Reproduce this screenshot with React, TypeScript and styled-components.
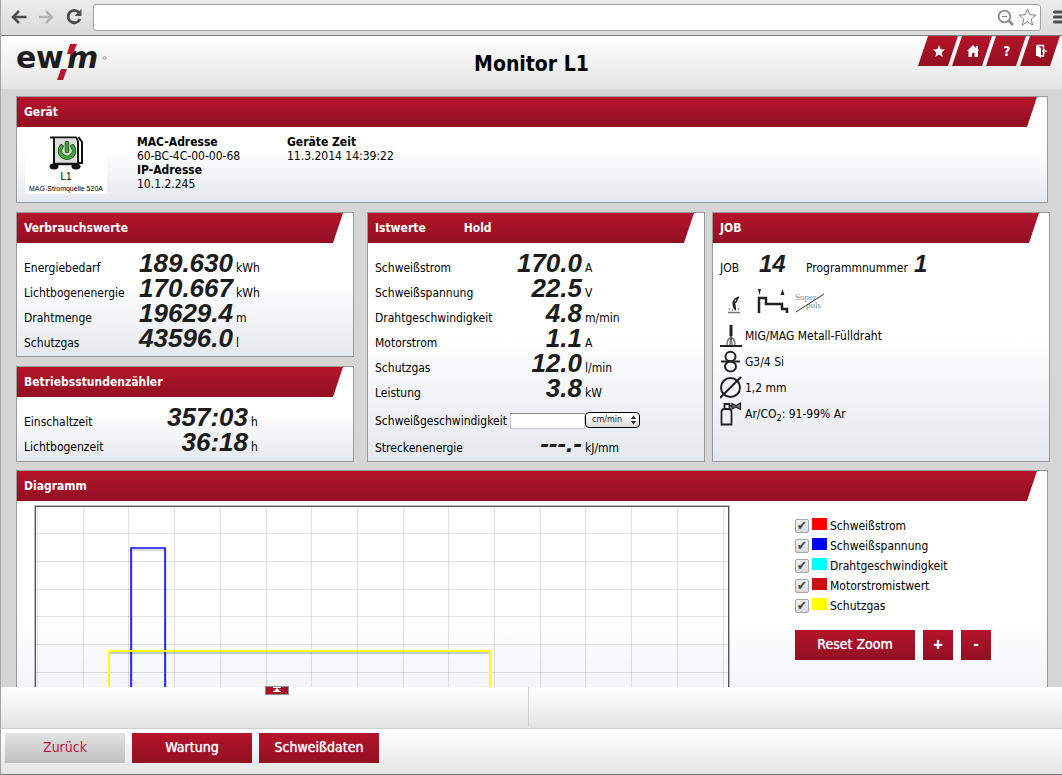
import React from "react";
import styled, { createGlobalStyle } from "styled-components";

const red = "linear-gradient(#b5142b, #920f22)";
const silver = "linear-gradient(#ffffff, #e4e4e4)";

const GlobalStyle = createGlobalStyle`
  * { box-sizing: border-box; }
  html, body, #root { height: 100%; }
  body {
    margin: 0;
    background: #d5d5d5;
    color: #000;
    font-family: "DejaVu Sans Condensed", "DejaVu Sans", sans-serif;
    font-stretch: condensed;
    font-size: 12px;
    line-height: 14px;
  }
  button, input, select { font: inherit; margin: 0; }
`;

const Page = styled.div`
  display: flex;
  flex-direction: column;
  height: 100%;
  border-left: 1px solid #a4a4a4;
  border-bottom: 1px solid #777;
`;

/* Browser bar */
const BrowserBar = styled.div`
  display: flex;
  align-items: center;
  height: 36px;
  flex: none;
  padding: 0 0 1px 10px;
  gap: 10px;
  background: linear-gradient(#ececec, #dadada);
  border-bottom: 1px solid #7d7d7d;
  overflow: hidden;
`;
const BarButton = styled.button<{ $faded?: boolean }>`
  display: flex;
  flex: none;
  padding: 0;
  border: 0;
  background: none;
  color: ${(p) => (p.$faded ? "#b4b4b4" : "#4c4c4c")};
`;
const Address = styled.div`
  display: flex;
  align-items: center;
  flex: 1;
  gap: 4px;
  height: 27px;
  padding-right: 3px;
  background: #fff;
  border: 1px solid #a2a2a2;
  border-radius: 3px;
`;
const AddressInput = styled.input`
  flex: 1;
  min-width: 0;
  height: 24px;
  border: 0;
  outline: 0;
  background: none;
`;

/* Application header */
const Header = styled.header`
  display: grid;
  grid-template-columns: 1fr auto 1fr;
  flex: none;
  height: 53px;
  background: ${silver};
`;
const LogoLink = styled.a`
  display: block;
  width: 92px;
  height: 48px;
  margin: 3px 0 0 15px;
`;
const Title = styled.h1`
  margin: 0;
  padding-top: 2px;
  align-self: center;
  font-size: 21px;
  line-height: 26px;
  font-weight: bold;
`;
const Nav = styled.nav`
  display: flex;
  justify-content: flex-end;
  padding-right: 2px;
`;
const Tab = styled.a`
  display: flex;
  align-items: center;
  justify-content: center;
  width: 40px;
  height: 30px;
  margin-left: -6px;
  padding-left: 2px;
  background: ${red};
  color: #fff;
  font-size: 14px;
  font-weight: bold;
  text-decoration: none;
  clip-path: polygon(10px 0, 100% 0, 30px 100%, 0 100%);
`;

/* Panels */
const Main = styled.main`
  flex: 1;
  min-height: 0;
  padding: 7px 12px 0 15px;
  overflow: auto;
  scrollbar-width: none;
`;
const Panel = styled.section`
  display: flex;
  flex-direction: column;
  border: 1px solid #999;
  background: linear-gradient(#fff 50%, #e5e8ed);
`;
const PanelTitle = styled.h2`
  display: flex;
  align-items: center;
  gap: 38px;
  flex: none;
  height: 30px;
  margin: 0 10px 0 0;
  padding: 0 7px;
  background: ${red};
  color: #fff;
  font-size: 12px;
  line-height: 14px;
  font-weight: bold;
  clip-path: polygon(0 0, 100% 0, calc(100% - 10px) 100%, 0 100%);
`;
const WidePanel = styled(Panel)`
  margin-right: 2px;
`;
const Device = styled.div`
  display: flex;
  height: 75px;
  padding: 4px 8px;
`;
const DeviceCard = styled.figure`
  display: flex;
  flex-direction: column;
  align-items: center;
  gap: 1px;
  width: 82px;
  height: 63px;
  margin: 0 30px 0 0;
  padding-top: 5px;
  background: #fff;
  font-family: "Liberation Sans", sans-serif;
  font-stretch: normal;
  svg { flex: none; }
`;
const DeviceName = styled.figcaption`
  display: flex;
  flex-direction: column;
  align-items: center;
  font-size: 10px;
  line-height: 12px;
  white-space: nowrap;
  small {
    font-size: 7px;
    line-height: 11px;
  }
`;
const Facts = styled.dl`
  width: 150px;
  margin: 0;
  padding-top: 4px;
  dt { font-weight: bold; }
  dd { margin: 0; }
`;

const Columns = styled.div`
  display: flex;
  margin: 9px 0 8px;
`;
const Column = styled.div<{ $gap?: number }>`
  display: flex;
  flex-direction: column;
  flex: 1 1 0;
  min-width: 0;
  gap: 9px;
  margin-right: ${(p) => p.$gap ?? 0}px;
  & > :last-child { flex: 1; }
`;

const Readings = styled.table`
  margin: 13px 7px 0;
  border-collapse: collapse;
  white-space: nowrap;
`;
const Label = styled.th<{ $width: number }>`
  width: ${(p) => p.$width}px;
  padding: 0;
  font-weight: normal;
  line-height: 25px;
  text-align: left;
  vertical-align: baseline;
`;
const Value = styled.td<{ $width: number }>`
  width: ${(p) => p.$width}px;
  padding: 0 3px 0 0;
  line-height: 14px;
  text-align: right;
  vertical-align: baseline;
`;
const Unit = styled.td`
  padding: 0;
  line-height: 25px;
  vertical-align: baseline;
`;
const Digits = styled.span`
  color: #1c1c1c;
  font-family: "Liberation Sans", sans-serif;
  font-stretch: normal;
  font-size: 26px;
  line-height: 14px;
  font-style: italic;
  font-weight: bold;
`;
const SpeedLabel = styled(Label)`
  line-height: 30px;
`;
const SpeedCell = styled.td`
  padding: 0;
  vertical-align: middle;
`;
const SpeedInput = styled.input`
  display: block;
  width: 75px;
  height: 16px;
  padding: 0 2px;
  border: 1px solid #ccc;
  border-top-color: #888;
  background: #fff;
`;
const SelectBox = styled.div`
  position: relative;
  width: 55px;
  height: 16px;
  margin-bottom: 3px;
  svg { position: absolute; right: 4px; top: 3px; pointer-events: none; }
`;
const UnitSelect = styled.select`
  display: block;
  appearance: none;
  width: 55px;
  height: 16px;
  padding: 0 0 0 6px;
  border: 1px solid #000;
  border-radius: 4px;
  background: linear-gradient(#fff, #dcdcdc);
  color: #222;
  font-family: "DejaVu Sans", sans-serif;
  font-stretch: normal;
  font-size: 8px;
  line-height: 12px;
`;

/* Job panel */
const JobLine = styled.div`
  display: flex;
  align-items: baseline;
  height: 25px;
  margin: 13px 7px 0;
  line-height: 25px;
`;
const JobName = styled.span`
  width: 39px;
`;
const JobNumber = styled(Digits)`
  width: 47px;
  font-size: 24px;
`;
const ProgramName = styled.span`
  width: 108px;
`;
const ModeIcons = styled.div`
  display: flex;
  align-items: center;
  gap: 6px;
  height: 32px;
  margin: 5px 7px;
`;
const JobList = styled.ul`
  margin: 0 7px;
  padding: 0;
  list-style: none;
`;
const JobItem = styled.li`
  display: flex;
  align-items: center;
  gap: 1px;
  height: 26px;
  svg { flex: none; }
  sub { font-size: 9px; line-height: 0; }
`;

/* Diagram */
const Diagram = styled.div`
  display: flex;
  align-items: flex-start;
  gap: 65px;
  padding: 4px 17px;
`;
const Legend = styled.ul`
  margin: 11px 0 14px;
  padding: 0;
  list-style: none;
`;
const LegendItem = styled.li`
  height: 20px;
  label {
    display: flex;
    align-items: center;
    gap: 3px;
    height: 20px;
  }
`;
const Check = styled.input`
  appearance: none;
  flex: none;
  width: 14px;
  height: 14px;
  border: 1px solid #a5a5a5;
  border-radius: 2px;
  background: linear-gradient(#f4f4f4, #d8d8d8);
  &:checked::before {
    content: "✔";
    display: block;
    font-size: 13px;
    line-height: 12px;
    text-align: center;
    color: #3c3c3c;
  }
`;
const Swatch = styled.span<{ $color: string }>`
  width: 15px;
  height: 12px;
  margin-bottom: 4px;
  background: ${(p) => p.$color};
`;
const ZoomButtons = styled.div`
  display: flex;
  gap: 8px;
`;
const Button = styled.button<{ $small?: boolean; $muted?: boolean }>`
  width: ${(p) => (p.$small ? 30 : 120)}px;
  height: 30px;
  padding: 0 0 2px;
  border: 0;
  background: ${(p) => (p.$muted ? "linear-gradient(#e2e2e2, #c0c0c0)" : red)};
  color: ${(p) => (p.$muted ? "#c8103c" : "#fff")};
  font-size: 14px;
  line-height: 20px;
  font-weight: ${(p) => (p.$small ? "bold" : "normal")};
  text-shadow: ${(p) => (p.$muted ? "none" : "0 0 1px #fff")};
`;

/* Footer */
const Status = styled.div`
  position: relative;
  display: grid;
  grid-template-columns: 1fr 1fr;
  flex: none;
  height: 42px;
  background: linear-gradient(#ffffff, #e4e4e4 40px);
  border-bottom: 1px solid #d0d0d0;
`;
const StatusCell = styled.div`
  height: 40px;
  margin-right: 4px;
  & + & { margin: 0 0 0 -4px; border-left: 1px solid #d0d0d0; }
`;
const Expand = styled.button`
  position: absolute;
  left: 25%;
  top: -1px;
  display: flex;
  justify-content: center;
  width: 24px;
  height: 9px;
  margin-left: -1px;
  padding: 0;
  border: 1px solid #8e8e8e;
  background: #a51128;
`;
const Footer = styled.footer`
  display: flex;
  gap: 7px;
  flex: none;
  height: 45px;
  padding: 4px;
  background: ${silver};
`;

type Reading = [string, string, string];

const consumption: Reading[] = [
  ["Energiebedarf", "189.630", "kWh"],
  ["Lichtbogenenergie", "170.667", "kWh"],
  ["Drahtmenge", "19629.4", "m"],
  ["Schutzgas", "43596.0", "l"],
];
const hours: Reading[] = [
  ["Einschaltzeit", "357:03", "h"],
  ["Lichtbogenzeit", "36:18", "h"],
];
const actual: Reading[] = [
  ["Schweißstrom", "170.0", "A"],
  ["Schweißspannung", "22.5", "V"],
  ["Drahtgeschwindigkeit", "4.8", "m/min"],
  ["Motorstrom", "1.1", "A"],
  ["Schutzgas", "12.0", "l/min"],
  ["Leistung", "3.8", "kW"],
];
const curves = [
  ["Schweißstrom", "#ff0000"],
  ["Schweißspannung", "#0000ff"],
  ["Drahtgeschwindigkeit", "#00ffff"],
  ["Motorstromistwert", "#cb1010"],
  ["Schutzgas", "#ffff00"],
];

function ReadingRow({ data, label, value }: { data: Reading; label: number; value: number }) {
  return (
    <tr>
      <Label scope="row" $width={label}>{data[0]}</Label>
      <Value $width={value}><Digits>{data[1]}</Digits></Value>
      <Unit>{data[2]}</Unit>
    </tr>
  );
}

const LogoText = styled.g`
  fill: #1d1d1b;
  font-family: "DejaVu Sans", sans-serif;
  font-stretch: normal;
  font-weight: bold;
  font-size: 30px;
`;

function Logo() {
  return (
    <svg width="92" height="48" viewBox="0 -4 92 48" role="img" aria-label="ewm">
      <LogoText>
        <text x="0" y="25">e</text>
        <text x="20" y="25">w</text>
        <text x="51" y="25" fontStyle="italic">m</text>
      </LogoText>
      <path d="M48 26L53 9" stroke="#f6f6f6" strokeWidth="2" />
      <path d="M54 1h7l-4 10h-6zM45 26h6l-4 11h-6z" fill="#b9152d" />
      <circle cx="88.500" cy="15" r="1.500" fill="none" stroke="#999" />
    </svg>
  );
}

function DeviceIcon() {
  return (
    <svg width="34" height="34" viewBox="0 0 34 34" aria-hidden="true">
      <path d="M1 1.500h26M5 1v28M27 1l2 4v22" fill="none" stroke="#111" strokeWidth="2" />
      <rect x="6" y="2.500" width="21" height="25" fill="#dcdcdc" />
      <path d="M6 28h23" stroke="#111" strokeWidth="2.500" />
      <path d="M29.500 1l3.500 5v21h-4" fill="none" stroke="#111" strokeWidth="2" />
      <ellipse cx="5" cy="30.500" rx="4.500" ry="3" fill="#111" />
      <ellipse cx="27" cy="30.500" rx="4.500" ry="3" fill="#111" />
      <path d="M12.500 10.500a7 7 0 1 0 11 0" fill="none" stroke="#1d4d17" strokeWidth="4.500" strokeLinecap="round" />
      <path d="M12.500 10.500a7 7 0 1 0 11 0" fill="none" stroke="#3fa535" strokeWidth="3" strokeLinecap="round" />
      <path d="M18 7v8" stroke="#1d4d17" strokeWidth="4.500" strokeLinecap="round" />
      <path d="M18 7v8" stroke="#3fa535" strokeWidth="3" strokeLinecap="round" />
    </svg>
  );
}

function Chart() {
  const columns = Array.from({ length: 16 }, (_, i) => Math.round(3 + i * 45.7));
  const rows = Array.from({ length: 9 }, (_, i) => Math.round(28 + i * 27.8));
  return (
    <svg width="696" height="260" viewBox="0 0 696 260" role="img" aria-label="Diagramm">
      <g stroke="#000" strokeOpacity="0.11">
        {columns.map((x) => <path key={x} d={`M${x + 0.5} 2V258`} />)}
        {rows.map((y) => <path key={y} d={`M2 ${y + 0.5}H694`} />)}
      </g>
      <g fill="none" strokeWidth="2">
        <path d="M98 260V44H132V260" stroke="#000" strokeOpacity="0.15" transform="translate(0 1)" />
        <path d="M97 260V43H131V260" stroke="#0a0af5" strokeWidth="1.600" />
        <path d="M75 260V146H456V260" stroke="#000" strokeOpacity="0.2" transform="translate(0 2)" />
        <path d="M75 260V146H456V260" stroke="#ffff14" />
      </g>
      <rect x="1" y="1" width="694" height="258" fill="none" stroke="#000" strokeOpacity="0.25" strokeWidth="2" />
      <rect x="1.500" y="1.500" width="693" height="257" fill="none" stroke="#545454" />
    </svg>
  );
}

function TorchIcon() {
  return (
    <svg width="24" height="24" viewBox="0 0 24 24" fill="none" stroke="#222" aria-hidden="true">
      <path d="M0 22h22" strokeWidth="2" />
      <path d="M11 1v11" strokeWidth="3" />
      <path d="M11 11v5" strokeWidth="1.500" />
      <path d="M7 21c0-4 1-6 3-7M15 21c0-4-1-6-3-7M10 21l.5-5M12 21l-.5-5" stroke="#777" strokeWidth="1.500" />
    </svg>
  );
}
function WireIcon() {
  return (
    <svg width="24" height="24" viewBox="0 0 24 24" fill="none" stroke="#222" strokeWidth="2" aria-hidden="true">
      <ellipse cx="10.500" cy="6.500" rx="5" ry="4.800" />
      <ellipse cx="10.500" cy="16.500" rx="5.500" ry="5" />
      <path d="M1 11.500h19" />
    </svg>
  );
}
function DiameterIcon() {
  return (
    <svg width="24" height="24" viewBox="0 0 24 24" fill="none" stroke="#222" strokeWidth="2" aria-hidden="true">
      <circle cx="10.500" cy="11.500" r="9.500" />
      <path d="M0 22L21 1" />
    </svg>
  );
}
function GasIcon() {
  return (
    <svg width="24" height="24" viewBox="0 0 24 24" fill="none" stroke="#222" strokeWidth="1.800" aria-hidden="true">
      <path d="M1.500 22.500V10c0-2 1-3 3-3h4c2 0 3 1 3 3v12.500z" />
      <path d="M4.500 7V2h5v5" />
      <path d="M9 4h3" />
      <path d="M12 1.500l4 2 4.500-2.500v6.500L16 5l-4 2z" fill="#777" strokeWidth="1.200" />
    </svg>
  );
}

export default function App() {
  return (
    <Page>
      <GlobalStyle />
      <BrowserBar>
        <BarButton aria-label="Zurück im Browser">
          <svg width="16" height="16" viewBox="0 0 16 16" fill="none" stroke="currentColor" strokeWidth="2.500"><path d="M15.500 8H2M8 2L2 8l6 6" /></svg>
        </BarButton>
        <BarButton $faded aria-label="Vorwärts">
          <svg width="18" height="16" viewBox="0 0 18 16" fill="none" stroke="currentColor" strokeWidth="2.500"><path d="M2 8h13M9 2l6 6-6 6" /></svg>
        </BarButton>
        <BarButton aria-label="Neu laden">
          <svg width="18" height="18" viewBox="0 0 18 18" fill="none" stroke="currentColor" strokeWidth="2.800"><path d="M14 4.500A6.200 6.200 0 1 0 15 11" /><path d="M16.500 1v7h-7z" fill="currentColor" stroke="none" /></svg>
        </BarButton>
        <Address>
          <AddressInput aria-label="Adresse" />
          <BarButton aria-label="Zoom">
            <svg width="17" height="17" viewBox="0 0 17 17" fill="none" stroke="#8a8a8a" strokeWidth="1.800"><circle cx="7.500" cy="7.500" r="5.800" /><path d="M5 7.500h5" strokeWidth="1.300" /><path d="M12 12l4 4" strokeWidth="2.500" /></svg>
          </BarButton>
          <BarButton aria-label="Lesezeichen">
            <svg width="19" height="18" viewBox="0 0 19 18" fill="none" stroke="#808080"><path d="M9.500 1.200l2.300 5.500 6 .5-4.600 4 1.400 5.800-5.100-3.200L4.400 17l1.400-5.800-4.600-4 6-.5z" /></svg>
          </BarButton>
        </Address>
        <BarButton aria-label="Menü">
          <svg width="11" height="14" viewBox="0 0 11 14" stroke="currentColor" strokeWidth="3" strokeLinecap="round"><path d="M3.500 2H14M3.500 7H14M3.500 12H14" /></svg>
        </BarButton>
      </BrowserBar>

      <Header>
        <LogoLink href="#start"><Logo /></LogoLink>
        <Title>Monitor L1</Title>
        <Nav>
          <Tab href="#favoriten" aria-label="Favoriten">
            <svg width="14" height="14" viewBox="0 0 14 14" fill="#fff"><path d="M7 1l1.700 4.200 4.300.4-3.300 2.900 1 4.500L7 10.500 3.300 13l1-4.500L1 5.600l4.300-.4z" /></svg>
          </Tab>
          <Tab href="#startseite" aria-label="Startseite">
            <svg width="14" height="14" viewBox="0 0 14 14" fill="#fff"><path d="M7 1L1 7h1.500v6H6V9h2.500v4H12V7h1.500L12 5.500V2h-2v2z" /></svg>
          </Tab>
          <Tab href="#hilfe">?</Tab>
          <Tab href="#abmelden" aria-label="Abmelden">
            <svg width="14" height="14" viewBox="0 0 14 14" fill="#fff"><path d="M2 1.500h1.500L7 4v10l-3.500-2H2z" /><path d="M3 1.500h6.500V6M9.500 8.500V12H7M13 7.200H8.500M10.500 5L8.500 7.200l2 2.200" stroke="#fff" strokeWidth="1.300" fill="none" /></svg>
          </Tab>
        </Nav>
      </Header>

      <Main>
        <WidePanel>
          <PanelTitle>Gerät</PanelTitle>
          <Device>
            <DeviceCard>
              <DeviceIcon />
              <DeviceName>L1<small>MAG-Stromquelle 520A</small></DeviceName>
            </DeviceCard>
            <Facts>
              <dt>MAC-Adresse</dt><dd>60-BC-4C-00-00-68</dd>
              <dt>IP-Adresse</dt><dd>10.1.2.245</dd>
            </Facts>
            <Facts>
              <dt>Geräte Zeit</dt><dd>11.3.2014 14:39:22</dd>
            </Facts>
          </Device>
        </WidePanel>

        <Columns>
          <Column $gap={13}>
            <Panel>
              <PanelTitle>Verbrauchswerte</PanelTitle>
              <Readings>
                <tbody>{consumption.map((r) => <ReadingRow key={r[0]} data={r} label={112} value={100} />)}</tbody>
              </Readings>
            </Panel>
            <Panel>
              <PanelTitle>Betriebsstundenzähler</PanelTitle>
              <Readings>
                <tbody>{hours.map((r) => <ReadingRow key={r[0]} data={r} label={112} value={115} />)}</tbody>
              </Readings>
            </Panel>
          </Column>
          <Column $gap={7}>
            <Panel>
              <PanelTitle><span>Istwerte</span><span>Hold</span></PanelTitle>
              <Readings>
                <tbody>
                  {actual.map((r) => <ReadingRow key={r[0]} data={r} label={135} value={75} />)}
                  <tr>
                    <SpeedLabel scope="row" $width={135}><label htmlFor="speed">Schweißgeschwindigkeit</label></SpeedLabel>
                    <SpeedCell><SpeedInput id="speed" /></SpeedCell>
                    <SpeedCell>
                      <SelectBox>
                        <UnitSelect aria-label="Einheit"><option>cm/min</option></UnitSelect>
                        <svg width="5" height="10" viewBox="0 0 5 10"><path d="M0 4l2.500-3.500L5 4zM0 6l2.500 3.500L5 6z" fill="#222" /></svg>
                      </SelectBox>
                    </SpeedCell>
                  </tr>
                  <ReadingRow data={["Streckenenergie", "---.-", "kJ/mm"]} label={135} value={75} />
                </tbody>
              </Readings>
            </Panel>
          </Column>
          <Column>
            <Panel>
              <PanelTitle>JOB</PanelTitle>
              <JobLine>
                <JobName>JOB</JobName>
                <JobNumber>14</JobNumber>
                <ProgramName>Programmnummer</ProgramName>
                <JobNumber>1</JobNumber>
              </JobLine>
              <ModeIcons>
                <svg width="28" height="28" viewBox="0 0 28 28" fill="none" stroke="#222" aria-hidden="true">
                  <path d="M8 24.500h12" stroke="#777" strokeWidth="1.500" />
                  <path d="M19 9l-4 2c-2 2-1 4 1 3l2-4M13.500 13c-1 3 0 6 2 9l-1-7" strokeWidth="1.500" />
                  <path d="M9 21h1M12 22h1M18 21h1" />
                </svg>
                <svg width="35" height="28" viewBox="0 0 35 28" fill="none" stroke="#222" strokeWidth="2.500" aria-hidden="true">
                  <path d="M5 25V10h7v6h16v5h5v4" />
                  <path d="M4 1h3L5.500 7zM26.500 7h4l-2-6z" fill="#222" stroke="none" />
                </svg>
                <svg width="30" height="28" viewBox="0 0 30 28" fontFamily="Liberation Serif" fontSize="9" fill="#888" role="img" aria-label="Superpuls">
                  <text x="0" y="12">Super</text>
                  <text x="11" y="20">puls</text>
                  <path d="M1 24L29 6" stroke="#333" />
                </svg>
              </ModeIcons>
              <JobList>
                <JobItem><TorchIcon />MIG/MAG Metall-Fülldraht</JobItem>
                <JobItem><WireIcon />G3/4 Si</JobItem>
                <JobItem><DiameterIcon />1,2 mm</JobItem>
                <JobItem><GasIcon /><span>Ar/CO<sub>2</sub>: 91-99% Ar</span></JobItem>
              </JobList>
            </Panel>
          </Column>
        </Columns>

        <WidePanel>
          <PanelTitle>Diagramm</PanelTitle>
          <Diagram>
            <Chart />
            <div>
              <Legend>
                {curves.map(([name, color]) => (
                  <LegendItem key={name}>
                    <label><Check type="checkbox" defaultChecked /><Swatch $color={color} />{name}</label>
                  </LegendItem>
                ))}
              </Legend>
              <ZoomButtons>
                <Button>Reset Zoom</Button>
                <Button $small>+</Button>
                <Button $small>-</Button>
              </ZoomButtons>
            </div>
          </Diagram>
        </WidePanel>
      </Main>

      <Status>
        <StatusCell />
        <StatusCell />
        <Expand aria-label="Meldungen aufklappen">
          <svg width="8" height="6" viewBox="0 0 8 6" fill="#fff"><path d="M0 0h8v1H0zM4 1l3 3H1zM0 4h8v1H0z" /></svg>
        </Expand>
      </Status>
      <Footer>
        <Button $muted>Zurück</Button>
        <Button>Wartung</Button>
        <Button>Schweißdaten</Button>
      </Footer>
    </Page>
  );
}
